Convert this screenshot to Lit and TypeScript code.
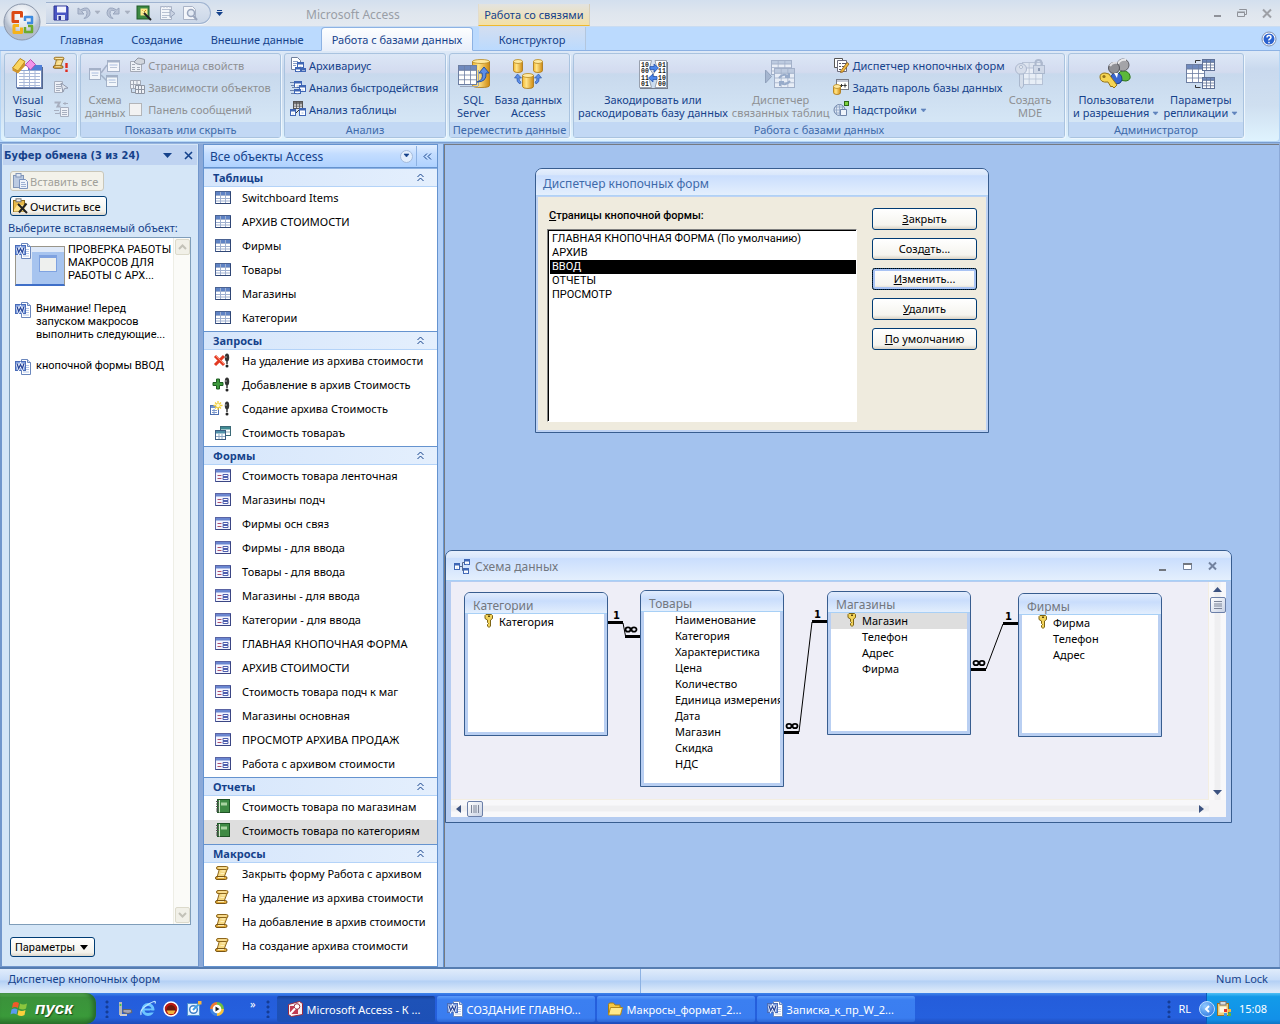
import { LitElement, html, css, svg, nothing } from "lit";
import type { SVGTemplateResult } from "lit";
import { customElement, property } from "lit/decorators.js";
import { classMap } from "lit/directives/class-map.js";
import { styleMap } from "lit/directives/style-map.js";

/* ---------- icon drawings ---------- */

const cylinder = (x: number, y: number, w: number, h: number) => svg`
  <path d="M${x} ${y + 2}v${h - 4}q0 2 ${w / 2} 2t${w / 2} -2v${-(h - 4)}z" fill="url(#gold)" stroke="#a87412" stroke-width=".8"/>
  <ellipse cx=${x + w / 2} cy=${y + 2} rx=${w / 2} ry="2" fill="#ffe9a0" stroke="#b98a20" stroke-width=".8"/>`;

const goldDefs = svg`<defs><linearGradient id="gold"><stop offset="0" stop-color="#f5b92e"/><stop offset=".35" stop-color="#ffe48a"/><stop offset="1" stop-color="#cf8a10"/></linearGradient></defs>`;

const gridTable = (x: number, y: number, w: number, h: number, head: string, line: string, paper = "#fff") => svg`
  <rect x=${x} y=${y} width=${w} height=${h} fill=${paper} stroke=${line}/>
  <rect x=${x} y=${y} width=${w} height=${h / 4} fill=${head} stroke=${line}/>
  <path d="M${x + w / 3} ${y}v${h}M${x + (2 * w) / 3} ${y}v${h}M${x} ${y + h / 2}h${w}M${x} ${y + (h * 3) / 4}h${w}" stroke=${line} stroke-width=".8" fill="none"/>`;

const miniWindow = (x: number, y: number, w: number, h: number, c = "#3f66b5") => svg`
  <rect x=${x} y=${y} width=${w} height=${h} fill="#fff" stroke=${c}/>
  <path d="M${x} ${y + 1}h${w}" stroke=${c} stroke-width="2"/>
  <path d="M${x + 2} ${y + 4.5}h${w - 4}" stroke="#9db4dc"/>`;

const exclaim = svg`<ellipse cx="15" cy="4.500" rx="2.200" ry="4" fill="#333"/><path d="M14.200 8h1.600v3h-1.600z" fill="#444"/><circle cx="15" cy="13" r="1.500" fill="#222"/><path d="M14 3v2" stroke="#aaa"/>`;

const scroll = svg`
  <path d="M5.500 3.500h8l-3.500 9h-7z" fill="#f6d983" stroke="#8d661c"/>
  <rect x="2.500" y="1.500" width="11.500" height="3" rx="1.500" fill="#f1c660" stroke="#8d661c"/>
  <rect x="1.500" y="11.500" width="11.500" height="3" rx="1.500" fill="#e2ad3e" stroke="#7a5513"/>
  <path d="M4.500 3h8M7.500 6h3.500M6.500 8.500h3.500M4 12.500h6" stroke="#fff3c4" stroke-width=".9"/>`;

const wordDoc = svg`
  <path d="M6.500 .5h6l3 3v12h-9z" fill="#fff" stroke="#6b87bd"/>
  <path d="M12.500 .5v3h3" fill="#cfdcf2" stroke="#6b87bd"/>
  <path d="M10 6.500h4M10 8.500h4M10 10.500h4M8 13h6" stroke="#b5c7e8"/>
  <rect x=".5" y="2.500" width="10" height="9" fill="#7fa0e0" stroke="#4a6cb8"/>
  <path d="M2 4.500l1.700 5 1.800-4 1.800 4 1.700-5" fill="none" stroke="#fff" stroke-width="2.600"/>
  <path d="M2 4.500l1.700 5 1.800-4 1.800 4 1.700-5" fill="none" stroke="#27469a" stroke-width="1.300"/>`;

const icons: Record<string, SVGTemplateResult> = {
  table: svg`<rect x=".5" y="1.500" width="15" height="12" fill="#fff" stroke="#4a6292"/>
    <rect x="1" y="2" width="14" height="3" fill="#5f83c4"/><path d="M1 13.500h15M15.500 2v12" stroke="#2f4675"/>
    <path d="M1 5.500h14M1 8.500h14M1 11h14M5.500 2v11M10.500 2v11" stroke="#9fb0d0"/>`,
  deleteQuery: svg`<path d="M0 3l9 9M9 3l-9 9" stroke="#e23a22" stroke-width="3"/><path d="M1 3l8 8" stroke="#ff8a70"/><g transform="translate(-3 0)">${exclaim}</g>`,
  addQuery: svg`<path d="M4.500 3h3v3.500h3.500v3h-3.500V13h-3V9.500H1v-3h3.500z" transform="translate(-3 -1)" fill="#3f9a3d" stroke="#1d5c22"/><g transform="translate(-3 0)">${exclaim}</g>`,
  makeQuery: svg`<rect x="-4.500" y="4.500" width="8" height="9" fill="#fff" stroke="#4d6fb0"/><path d="M-4 6h7" stroke="#6f93d6" stroke-width="2"/><path d="M-3 9.500h5M-3 11.500h5M-1 8v5" stroke="#7f9ace"/>
    <path d="M3 0v9M-1.500 4.500h9M0 1.500l6 6M6 1.500l-6 6" stroke="#f3cf3c" stroke-width="1.300"/><circle cx="3" cy="4.500" r="1.800" fill="#fffbd0"/><g transform="translate(-3 0)">${exclaim}</g>`,
  selectQuery: svg`<rect x="5.500" y="1.500" width="10" height="9" fill="#fff" stroke="#3c6a78"/><rect x="6" y="2" width="9" height="2.500" fill="#3f8a92"/><path d="M6 7h9M10.500 5v5" stroke="#8fb0ba"/>
    <rect x=".5" y="5.500" width="10" height="9" fill="#fff" stroke="#3c5c80"/><rect x="1" y="6" width="9" height="2.500" fill="#4f8fa8"/><path d="M1 11.500h9M4 9v5M7 9v5" stroke="#8fa8c4"/>`,
  form: svg`<rect x=".5" y="1.500" width="15" height="12" fill="#f4f5ff" stroke="#5a64a4"/><rect x="1" y="2" width="14" height="2.500" fill="#6a86d0"/>
    <path d="M1 13.500h15M15.500 2v12" stroke="#3b4684"/><path d="M2.500 7.500h4M2.500 10.500h4" stroke="#b0506a"/><path d="M8 6.500h5v2H8zM8 9.500h5v2H8z" fill="#fff" stroke="#4f5fae"/>`,
  report: svg`<rect x="2.500" y=".5" width="12" height="13" fill="#3f8a44" stroke="#1f5426"/><path d="M6 3.500h6v3H6z" fill="#a9d3a0"/><path d="M4.500 1v12.500" stroke="#d9ecd2"/><path d="M1 2.500h3M1 5h3M1 7.500h3M1 10h3M1 12h3" stroke="#555"/>`,
  macro: svg`<g transform="translate(-1 -1)">${scroll}</g>`,
  word: wordDoc,
  key: svg`<path d="M5 1.500h5.500l1 1v3l-2 1.500v6l-1.500 1.500L6.500 13V11.500l1-1-1-1V7L4 5.500v-3z" fill="#f2d35a" stroke="#7d6415"/><rect x="7" y="2.500" width="2" height="1.500" fill="#5d4a10"/>`,
  save: svg`<path d="M1 1h13l1 1v13H1z" fill="#4a56c4" stroke="#2c3590"/><rect x="4" y="1.500" width="9" height="6" fill="#f2f4ff"/><rect x="4" y="10" width="8" height="5" fill="#dde2f6"/><rect x="5.500" y="11" width="2.500" height="4" fill="#2c3590"/>`,
  undo: svg`<path d="M2 3v6h6L5.500 6.500Q11 3 11 8.500q0 3-3 5 6-1 6-6Q13 0 4.500 4.800z" fill="#b9c3d6" stroke="#98a5bd"/>`,
  redo: svg`<path d="M13 3v6H7l2.500-2.500Q4 3 4 8.500q0 3 3 5-6-1-6-6Q2 0 10.500 4.800z" fill="#b9c3d6" stroke="#98a5bd"/>`,
  designer: svg`<rect x="1" y="1" width="12" height="13" fill="#3d8a42" stroke="#215a28"/><rect x="4.500" y="3.500" width="7" height="7" fill="#ffe98a"/><path d="M6 5l3 3M10 5l-3 3" stroke="#c78418"/><path d="M7 7l8 8" stroke="#222" stroke-width="2"/><path d="M6 6l2 2" stroke="#fff6a0" stroke-width="2"/>`,
  exportPage: svg`<path d="M1.500 1.500h11v13h-11z" fill="#f4f6fa" stroke="#a9b3c6"/><path d="M3 4.500h8M3 7.500h8M3 10.500h8M3 12.500h5M2 1v2M5 1v2M8 1v2M11 1v2" stroke="#b8c1d2"/><path d="M11 4.500l5 4-5 4z" fill="#c9d2e2" stroke="#9aa6bd"/>`,
  preview: svg`<path d="M1.500 1.500h9l3 3v10h-12z" fill="#f4f6fa" stroke="#a9b3c6"/><circle cx="9" cy="8" r="3.500" fill="#e4ebf5" stroke="#9aa6bd" stroke-width="1.500"/><path d="M11.500 11l3.500 4" stroke="#9aa6bd" stroke-width="2"/>`,
  runMacro: svg`<g transform="translate(-1 -1) scale(.85)">${scroll}</g><path d="M13.500 6v5M13.500 12.500v2.500" stroke="#e02b1c" stroke-width="2.400"/>`,
  menuMacro: svg`<path d="M1.500 2.500h8v11h-8z" fill="#eef1f7" stroke="#a7afbf"/><path d="M3 5.500h5M3 7.500h5M3 9.500h5M3 11.500h4" stroke="#a7afbf"/><path d="M8 4l7 5-3.500.5L10 13z" fill="#dfe5ef" stroke="#9099ac"/>`,
  convertMacro: svg`<path d="M1.500 1.500h5l-2 4h3M6.500 11.500l3 3" fill="none" stroke="#a7afbf" stroke-width="2"/><path d="M7.500 6.500h8v9h-8z" fill="#eef1f7" stroke="#a7afbf"/><path d="M9 9.500h5M9 11.500h5M9 13.500h5M10 2.500h5M12 1v3M1 9.500h5M2 12.500h4" stroke="#a7afbf"/>`,
  propSheet: svg`<path d="M1.500 4.500h11v10h-11z" fill="#eef1f6" stroke="#a3a9b5"/><path d="M3 7.500h3M3 10.500h3M3 12.500h3M8 10.500h3M8 12.500h3" stroke="#a3a9b5"/><path d="M5 5l4-4 3 .5 3.500 1v4l-4 1L8 7z" fill="#d2d6dd" stroke="#8f96a3"/>`,
  dependencies: svg`<path d="M1.500 1.500h10v8h-10zM4.500 1.500v8M8 1.500v8M1.500 5.500h10" fill="#eef1f6" stroke="#a3a9b5"/><path d="M6.500 6.500h9v8h-9zM9.500 6.500v8M12.500 6.500v8M6.500 10.500h9" fill="#eef1f6" stroke="#8f96a3"/><path d="M2.500 10v3.500H6" fill="none" stroke="#8f96a3"/>`,
  archivist: svg`<path d="M1.500 .5h6l3 3v9h-9z" fill="#fff" stroke="#6f7f9c"/><path d="M3 4.500h5M3 6.500h5M3 8.500h3" stroke="#8ba0c8"/>${miniWindow(7.5, 5.5, 6, 5)}${miniWindow(5.5, 10.5, 5, 4)}${miniWindow(11.5, 11.5, 4, 3)}`,
  speed: svg`${miniWindow(4.5, 2.5, 7, 6)}${miniWindow(9.5, 6.5, 6, 6)}${miniWindow(4.5, 10.5, 6, 4)}<path d="M0 3.500h4M1 6.500h3M2 8.500h5M0 11.500h4M1 14.500h3" stroke="#6b83ad"/>`,
  analyzeTable: svg`${gridTable(3.5, 0.5, 9, 7, "#777", "#555")}${miniWindow(0.5, 8.5, 5, 6)}${miniWindow(9.5, 7.5, 6, 7)}<path d="M6 12l3-3" stroke="#333"/>`,
  switchboard: svg`<path d="M1.500 1.500h8v9h-8z" fill="#fff" stroke="#555"/><path d="M4.500 3.500h9v11h-9z" fill="#fff" stroke="#6d6d7d"/><path d="M6 6.500h2M6 9.500h2M6 12.500h2M9 6.500h4M9 9.500h3" stroke="#556"/><path d="M8 13.500l6-8 2 1.500-6 8-2.500.5z" fill="#f0b93c" stroke="#8a5a1c" stroke-width=".8"/>`,
  password: svg`${goldDefs}<rect x="3.500" y=".5" width="12" height="10" fill="#fff" stroke="#777b88"/><path d="M4 2h11" stroke="#c5cad8" stroke-width="2"/><path d="M7 6.500h3M8.500 5v3M12 4.500v4M10.300 6.500h3.400" stroke="#333"/>${cylinder(0.5, 5.5, 7, 10)}`,
  addins: svg`<circle cx="6.500" cy="9" r="5.500" fill="#dce6f4" stroke="#6f84a8"/><path d="M1 9h11M6.500 3.500v11M3.500 4.500v9M9.500 4.500v9M2 6h9M2 12h9" stroke="#8ea3c4" stroke-width=".8"/><path d="M7.500 8.500h6v6h-6z" fill="#eef3fa" stroke="#6f84a8"/><rect x="11.500" y=".5" width="4" height="4" fill="#7fd13e" stroke="#2c6b17"/>`,
  pasteAll: svg`<rect x="1.500" y="2.500" width="10" height="12" fill="#bccbe2" stroke="#8296b8"/><rect x="4" y=".5" width="5" height="3.500" fill="#dfe7f3" stroke="#8296b8"/><path d="M7.500 6.500h6l2 2v7h-8z" fill="#eef3fb" stroke="#7d94bd"/><path d="M9 9.500h4M9 11.500h5M9 13.500h5" stroke="#9db1d3"/>`,
  clearAll: svg`<rect x="1.500" y="2.500" width="11" height="11" fill="#e8ba4a" stroke="#8a6a1c"/><path d="M2 12l3-5h9l-2 6.500H2z" fill="#ffe48e"/><rect x="4" y=".8" width="5" height="3" fill="#eee" stroke="#777"/><path d="M6 6l9 9M14.500 5.500L7 14.500" stroke="#222" stroke-width="2"/>`,
  schema: svg`${miniWindow(0.5, 4.5, 5, 6)}${miniWindow(10.5, 0.5, 5, 5)}${miniWindow(9.5, 9.5, 5, 5)}<path d="M6 7.500h2.500M8.500 3.500v8M8.500 3.500h2M8.500 11.500h1" stroke="#55688f" fill="none"/>`,
  accessApp: svg`<path d="M1.500 3.500l11-3 3 2v11l-11 2-3-2z" fill="#fbeef0" stroke="#9b2a3f"/><path d="M3 5h8v8H3z" fill="#c23a52"/><circle cx="10" cy="5.500" r="2.800" fill="#fff" stroke="#9b2a3f"/><path d="M8 7.500l-5 5.500" stroke="#fff" stroke-width="2"/>`,
  folder: svg`<path d="M1.500 3.500q0-1.500 1.500-1.500h3.500l1.500 2h5v9.500h-11.500z" fill="#f6c842" stroke="#a87d12"/><path d="M3.500 6.500h12l-2 7.500h-12z" fill="#ffe98c" stroke="#b58a1c"/>`,
  desktop: svg`<path d="M3.500 1v13" stroke="#b8b8b8" stroke-width="3"/><circle cx="3.500" cy="4" r="1" fill="#3c3"/><path d="M6 8.500h8l1 3-4 1-5-1z" fill="#a4a4b4" stroke="#666"/><path d="M3 14h7" stroke="#ccc" stroke-width="2"/>`,
  ie: svg`<circle cx="8" cy="8.500" r="5" fill="none" stroke="#6cc5ff" stroke-width="3"/><path d="M4 8.500h9.500" stroke="#6cc5ff" stroke-width="2"/><path d="M10 10.500h5" stroke="#2363dc" stroke-width="2"/><path d="M1 14Q-1 9 8 3.500T15 2.500" fill="none" stroke="#bfe6ff" stroke-width="1.200"/>`,
  redCircle: svg`<circle cx="8" cy="8" r="7" fill="#b81a14" stroke="#fff" stroke-width="1.500"/><path d="M3 10q1-6 5-6 4 0 5 6z" fill="#6a1a0c"/><path d="M3.500 9.500h9l-2 3.500h-5z" fill="#f2b33c"/>`,
  outlook: svg`<rect x="1.500" y="2.500" width="12" height="12" fill="#dbeeff" stroke="#4d8fd0"/><circle cx="7.500" cy="8.500" r="3.800" fill="#fff" stroke="#3f7fc8" stroke-width="1.500"/><path d="M7 9l7-7" stroke="#3aa0e8" stroke-width="2"/><rect x="12" y="0" width="3.500" height="3.500" fill="#f7b53c"/>`,
  media: svg`<path d="M8 1a7 7 0 0 1 7 7H8z" fill="#6fbf3f"/><path d="M15 8a7 7 0 0 1-7 7V8z" fill="#f6c33c"/><path d="M8 15a7 7 0 0 1-7-7h7z" fill="#3f86e0"/><path d="M1 8a7 7 0 0 1 7-7v7z" fill="#ef7a2f"/><circle cx="8" cy="8" r="4.300" fill="#fff"/><path d="M6.500 5.500l4 2.500-4 2.500z" fill="#222"/>`,
  trayPaste: svg`<rect x="1.500" y="2.500" width="11" height="12" fill="#f0cd7a" stroke="#9c7420"/><rect x="4" y=".5" width="6" height="3.500" fill="#ddd" stroke="#777"/><path d="M3.500 5.500h7v6h-7z" fill="#fff8e0"/><rect x="8" y="8" width="3" height="3" fill="#e2342a"/><rect x="12" y="8" width="3" height="3" fill="#f8b83a"/><rect x="8" y="12" width="3" height="3" fill="#3f9be8"/><rect x="12" y="12" width="3" height="3" fill="#59b83c"/>`,
  help: svg`<circle cx="8" cy="8" r="7" fill="#fff" stroke="#7d8fb0"/><circle cx="8" cy="8" r="5.500" fill="#2a62cf"/><path d="M6 6.500q0-2 2-2t2 1.800q0 1-1.200 1.700T8 9.500M8 10.800v1.500" fill="none" stroke="#fff" stroke-width="1.500"/>`,
  vb: svg`<rect x="4.500" y="7.500" width="25" height="22" fill="#fff" stroke="#6f86b5"/><path d="M16 7h14v5H16z" fill="#4f7fd8"/><path d="M5 12.500h24" stroke="#8fa5cf"/><path d="M7 15.500h21M7 18.500h21M7 21.500h21M7 24.500h21M7 27.500h21M12 13v16M17.500 13v16M23 13v16" stroke="#a9b8d8"/><path d="M5 30.500h26M30.500 9v21" stroke="#55688f"/>
    <path d="M.5 10L8 .5l5 3-7 9.500z" fill="#fbd55f" stroke="#b98718"/><path d="M6 13l7-9.500v4.500l-7 7.500-5.500-3v-2.500z" fill="#d2952a"/><path d="M13.500 6.500l5-5 5 5-5 5.500z" fill="#f293e8" stroke="#b94fb2"/>`,
  schemaBig: svg`<g opacity=".75">${miniWindow(0.5, 10.5, 11, 11, "#95a3bb")}${miniWindow(18.5, 2.5, 12, 11, "#95a3bb")}${miniWindow(17.5, 17.5, 11, 11, "#95a3bb")}<path d="M12 15l6-8M12 17l6 6" stroke="#95a3bb" stroke-width="1.500"/><path d="M3 17.500h6M21 9.500h7M20 24.500h7" stroke="#b4bfd2"/></g>`,
  sqlServer: svg`${goldDefs}${cylinder(14.5, 1.5, 17, 28)}${gridTable(0.5, 7.5, 18, 19, "#6f89bd", "#6d7ea2")}<path d="M2 28.500h18M20.500 12v16" stroke="#9aa5bb"/><path d="M19 24q7-2 5-9h-3l5-6 5 6h-3q1 9-9 9z" fill="#5b8de8" stroke="#27519f"/>`,
  baseData: svg`${goldDefs}${cylinder(1.5, 1.5, 9, 13)}${cylinder(21.5, 1.5, 9, 13)}${cylinder(10.5, 15.5, 11, 15)}<path d="M8 26q-4-2-3-6H2.500L5.500 16l4 4H7q0 3 2 4zM24 26q4-2 3-6h2.500L26.500 16l-4 4H25q0 3-2 4z" fill="#5b8de8" stroke="#27519f" stroke-width=".6"/>`,
  encode: svg`<path d="M2.500 2.500h12l-2 8 4 6-4 6 2 7h-12zM18 2.500h11.500v27H18l2-7-4-6 4-6z" fill="#fff" stroke="#98a0ae"/><path d="M3 30.500h27M30.500 4v27" stroke="#777f8e"/>
    <g font-family="Liberation Mono" font-size="6.500" font-weight="700" fill="#222"><text x="4" y="9">10</text><text x="21" y="9">01</text><text x="4" y="15">00</text><text x="21" y="15">11</text><text x="4" y="21.500">11</text><text x="21" y="21.500">10</text><text x="4" y="27.500">01</text><text x="21" y="27.500">00</text></g>
    <path d="M13 8.500h4V6l4.500 4-4.500 4v-2.500h-4zM20 18.500h-4V16l-4.500 4 4.500 4v-2.500h4z" fill="#4b85ea" stroke="#1e4aa6" stroke-width=".7"/>`,
  linkedTables: svg`<g opacity=".85"><path d="M0.500 12v13l6-6.500z" fill="#9fb0cb" stroke="#8697b3"/>${gridTable(6.5, 2.5, 20, 14, "#b9c7dd", "#9aa9c3", "#edf1f8")}${gridTable(9.5, 10.5, 20, 19, "#b9c7dd", "#9aa9c3", "#edf1f8")}<path d="M14 20q5-6 10-1M25 23q-5 6-10 1M24 15v4h-4M15 28v-4h4" fill="none" stroke="#8fa3c4" stroke-width="2"/></g>`,
  mde: svg`<g opacity=".8">${gridTable(8.5, 4.5, 20, 22, "#dfe6f0", "#b0bbcf", "#eff3f9")}<circle cx="7" cy="11" r="5.500" fill="#d7deea" stroke="#a3b0c6"/><circle cx="7" cy="9" r="1.500" fill="#fff" stroke="#a3b0c6"/><path d="M5.500 16h4v12l-2 2.500-2-2.500z" fill="#d7deea" stroke="#a3b0c6"/><path d="M21.500 8V5q0-3 3-3t3 3v3" fill="none" stroke="#a3b0c6" stroke-width="2"/><rect x="19.500" y="7.500" width="11" height="8" fill="#cfd8e6" stroke="#a3b0c6"/><path d="M25 10v3" stroke="#7f8ea8" stroke-width="2"/></g>`,
  users: svg`<path d="M18 22q-1-9 5-9t7 5q1 4-4 5z" fill="#5cb83a" stroke="#2d7418"/><circle cx="23" cy="7" r="6" fill="#a4a4a8" stroke="#606066"/><path d="M18 6q2-5 8-4" fill="none" stroke="#e8e8ea" stroke-width="2"/><path d="M10 24q0-9 6-9t6 7q-1 4-6 4z" fill="#3a67cf" stroke="#1d3c8e"/><circle cx="14" cy="10" r="5.500" fill="#8f8f94" stroke="#55555b"/><path d="M10 8q2-4 7-3" fill="none" stroke="#dedee2" stroke-width="2"/><path d="M14 15h4l-1 5z" fill="#fff"/><path d="M0 19q0-4 5-4t6 4l6 8-3 3-2-2-1 1-3-5q-8 1-8-5z" fill="#f6d552" stroke="#94741a"/><circle cx="4" cy="18.500" r="1.600" fill="#94741a"/>`,
  replication: svg`${gridTable(1.5, 6.5, 18, 18, "#6f89bd", "#6d7ea2")}${gridTable(17.5, 1.5, 12, 11, "#6f89bd", "#5f7196")}${gridTable(17.5, 19.5, 12, 11, "#6f89bd", "#5f7196")}<path d="M10.500 5V2.500h5M10.500 27v2.500h5" fill="none" stroke="#333"/>`,
};

const icon = (name: string, size = 16) =>
  html`<svg class="icon" width=${size} height=${size} viewBox="0 0 ${size} ${size}" aria-hidden="true">${icons[name]}</svg>`;

const caret = (color = "#15428b") =>
  html`<svg class="caret" width="7" height="4" viewBox="0 0 7 4" aria-hidden="true"><path d="M1 0h5L3.500 3z" fill=${color} stroke=${color} stroke-width=".6" /></svg>`;

const baseStyles = css`
  * { box-sizing: border-box; }
  button, select, input { font: inherit; color: inherit; margin: 0; padding: 0; }
  button { background: none; border: 0; }
  ul { list-style: none; margin: 0; padding: 0; }
  a { color: inherit; text-decoration: none; }
  h2, h3, p { margin: 0; font: inherit; }
  svg { display: block; flex: none; overflow: visible; }
`;

/* ---------- title bar, tabs and ribbon ---------- */

@customElement("access-ribbon")
class AccessRibbon extends LitElement {
  static styles = [baseStyles, css`
    :host { display: block; position: relative; color: #15428b; background: #bbdafe; }
    .titlebar { display: flex; height: 27px; padding-left: 46px; background: linear-gradient(#d3dfee, #dfe6ee 50%, #e4e9f0); border-bottom: 1px solid #c9dcf2; }
    .quick { display: flex; align-items: center; gap: 7px; width: 165px; height: 22px; margin-top: 2px; padding: 0 7px; border: 1px solid #9fb3d0; border-left: 0; border-radius: 0 11px 11px 0; background: linear-gradient(#dde5f0, #cbd7e8); box-shadow: 0 1px #f5f8fc; }
    .pair { display: flex; align-items: center; gap: 2px; }
    .pair .caret { margin: 0 -2px 0 0; }
    .more { width: 17px; display: flex; flex-direction: column; align-items: center; gap: 1px; padding-top: 10px; }
    .bar { width: 5px; height: 1px; background: #15428b; }
    .title { flex: 0 0 250px; text-align: center; font-size: 12px; line-height: 29px; color: #999ea6; }
    .context { width: 112px; margin-top: 4px; text-align: center; line-height: 21px; font-size: 11px; background: linear-gradient(#e3e3e0, #f3e0a6); border-bottom: 1px solid #f0b92e; border-left: 1px solid #e3dccb; border-right: 1px solid #d8cfb8; }
    .wincontrols { margin-left: auto; display: flex; gap: 11px; padding: 5px 6px 0 0; }
    .wincontrols button { width: 14px; height: 16px; }
    .office { position: absolute; left: 3px; top: 3px; width: 38px; height: 38px; z-index: 1; }
    .tabs { display: flex; gap: 6px; height: 24px; padding-left: 49px; padding-right: 3px; border-bottom: 1px solid #8db2e3; line-height: 25px; }
    .tab { padding: 0 11px; font-size: 11px; height: 24px; }
    .tab.active { background: linear-gradient(#fdfeff, #e9effa); border: 1px solid #8db2e3; border-bottom-color: #eaf0fa; border-radius: 4px 4px 0 0; padding: 0 10px; line-height: 23px; }
    .tab.contextual { width: 107px; text-align: center; background: linear-gradient(#d3def0, #bbdafe); border-right: 1px solid #b3c6dd; padding: 0; height: 23px; }
    .help { margin-left: auto; padding-top: 3px; height: 20px; }
    .ribbon { display: flex; gap: 3px; height: 91px; padding: 2px 3px 0; border: 1px solid #b5d5f5; border-top: 0; border-radius: 0 0 4px 4px; background: linear-gradient(#dde9f7, #c9d9ee 20%, #cfdff0 60%, #dff3fe); }
    .under { height: 2px; background: linear-gradient(#6a92cb, #a5c0e4); }
    .group { display: flex; flex-direction: column; height: 85px; border: 1px solid #a9c3df; border-radius: 3px; background: linear-gradient(#dce7f6, #d3dbef 22%, #c8d9ed 24%, #d9eaf8); box-shadow: 1px 1px #eef6fd; }
    .content { flex: 1; display: flex; gap: 4px; padding: 0 4px; }
    .caption { height: 15px; line-height: 15px; text-align: center; color: #3e6aaa; background: #c2d8f4; white-space: nowrap; }
    .big { display: flex; flex-direction: column; align-items: center; padding-top: 4px; line-height: 13px; white-space: nowrap; }
    .big .icon { margin-bottom: 3px; }
    .column { display: flex; flex-direction: column; }
    .small { display: flex; align-items: center; gap: 3px; height: 22px; white-space: nowrap; }
    .caret { display: inline-block; vertical-align: middle; margin-left: 3px; }
    :disabled, .off { color: #8e9093; }
    .check { appearance: none; width: 13px; height: 13px; margin: 0 3px 0 0; border: 1px solid #b3b5b8; background: #f2f2f2; }
    .w-macro { width: 73px; } .w-show { width: 201px; } .w-analyze { width: 162px; }
    .w-move { width: 121px; } .w-data { width: 492px; } .w-admin { width: 176px; }
    .w-macro .content, .w-move .content { padding: 0 7px; justify-content: space-between; gap: 0; }
    .w-analyze .content { padding: 0 5px; }
  `];

  private big(name: string, lines: string[], off = false, menu = false) {
    return html`<button class="big" ?disabled=${off}>${icon(name, 32)}
      ${lines.map((l, i) => html`<span>${l}${menu && i === lines.length - 1 ? caret("#5f83bd") : nothing}</span>`)}</button>`;
  }

  private small(name: string, label: string, off = false, menu = false) {
    return html`<button class="small" ?disabled=${off} aria-label=${label || name}>${icon(name)}${label ? html`<span>${label}${menu ? caret("#5f83bd") : nothing}</span>` : nothing}</button>`;
  }

  render() {
    return html`
      <header class="titlebar">
        <div class="quick">
          <button aria-label="Сохранить">${icon("save")}</button>
          <button class="pair" disabled aria-label="Отменить">${icon("undo")}${caret("#a7b0c0")}</button>
          <button class="pair" disabled aria-label="Вернуть">${icon("redo")}${caret("#a7b0c0")}</button>
          <button aria-label="Конструктор">${icon("designer")}</button>
          <button disabled aria-label="Экспорт">${icon("exportPage")}</button>
          <button disabled aria-label="Просмотр">${icon("preview")}</button>
        </div>
        <button class="more" aria-label="Настройка"><span class="bar"></span><svg width="7" height="4"><path d="M0 0h7L3.500 4z" fill="#15428b" /></svg></button>
        <div class="title">Microsoft Access</div>
        <div class="context">Работа со связями</div>
        <div class="wincontrols">
          <button aria-label="Свернуть"><svg width="14" height="14"><path d="M4 10h7" stroke="#8f9299" stroke-width="2" /></svg></button>
          <button aria-label="Восстановить"><svg width="14" height="14"><path d="M4.500 4V3.500h7v5H10M2.500 6.500h7v4h-7zM2 6h8" fill="none" stroke="#8f9299" /></svg></button>
          <button aria-label="Закрыть"><svg width="14" height="14"><path d="M3 3.500l8 8M11 3.500l-8 8" stroke="#9da0a6" stroke-width="2" /></svg></button>
        </div>
      </header>
      <button class="office" aria-label="Office">
        <svg width="38" height="38" viewBox="0 0 38 38"><defs><radialGradient id="orb" cy=".3"><stop offset="0" stop-color="#fff" /><stop offset=".75" stop-color="#dbe1ea" /><stop offset="1" stop-color="#b4bece" /></radialGradient></defs>
          <circle cx="19" cy="19" r="18" fill="url(#orb)" stroke="#8b97ab" />
          <g fill="none" stroke-width="3" stroke-linejoin="round"><path d="M16 18.500H10V9.500h8.500v5" stroke="#dc4a14" /><path d="M22 18v-4h7v6h-5" stroke="#3d8be0" stroke-width="2.500" /><path d="M16 22.500H11v7h7.500v-5" stroke="#f5b21a" /><path d="M22 24v5h7v-6h-4" stroke="#6cab2c" stroke-width="2.500" /></g>
        </svg>
      </button>
      <nav class="tabs">
        <button class="tab">Главная</button>
        <button class="tab">Создание</button>
        <button class="tab">Внешние данные</button>
        <button class="tab active">Работа с базами данных</button>
        <button class="tab contextual">Конструктор</button>
        <button class="help" aria-label="Справка">${icon("help")}</button>
      </nav>
      <div class="ribbon">
        <section class="group w-macro"><div class="content">
          ${this.big("vb", ["Visual", "Basic"])}
          <div class="column">${this.small("runMacro", "")}${this.small("menuMacro", "", true)}${this.small("convertMacro", "", true)}</div>
        </div><div class="caption">Макрос</div></section>
        <section class="group w-show"><div class="content">
          ${this.big("schemaBig", ["Схема", "данных"], true)}
          <div class="column">${this.small("propSheet", "Страница свойств", true)}${this.small("dependencies", "Зависимости объектов", true)}
            <label class="small off"><input class="check" type="checkbox" disabled />Панель сообщений</label></div>
        </div><div class="caption">Показать или скрыть</div></section>
        <section class="group w-analyze"><div class="content">
          <div class="column">${this.small("archivist", "Архивариус")}${this.small("speed", "Анализ быстродействия")}${this.small("analyzeTable", "Анализ таблицы")}</div>
        </div><div class="caption">Анализ</div></section>
        <section class="group w-move"><div class="content">
          ${this.big("sqlServer", ["SQL", "Server"])}${this.big("baseData", ["База данных", "Access"])}
        </div><div class="caption">Переместить данные</div></section>
        <section class="group w-data"><div class="content">
          ${this.big("encode", ["Закодировать или", "раскодировать базу данных"])}
          ${this.big("linkedTables", ["Диспетчер", "связанных таблиц"], true)}
          <div class="column">${this.small("switchboard", "Диспетчер кнопочных форм")}${this.small("password", "Задать пароль базы данных")}${this.small("addins", "Надстройки", false, true)}</div>
          ${this.big("mde", ["Создать", "MDE"], true)}
        </div><div class="caption">Работа с базами данных</div></section>
        <section class="group w-admin"><div class="content">
          ${this.big("users", ["Пользователи", "и разрешения"], false, true)}${this.big("replication", ["Параметры", "репликации"], false, true)}
        </div><div class="caption">Администратор</div></section>
      </div>
      <div class="under"></div>`;
  }
}

/* ---------- clipboard pane ---------- */

@customElement("clipboard-pane")
class ClipboardPane extends LitElement {
  static styles = [baseStyles, css`
    :host { display: flex; flex-direction: column; width: 199px; padding: 1px 1px 0 1px; background: #d5e6f7; border: solid #7297cc; border-width: 0 1px 1px 2px; font-size: 11px; }
    .head { display: flex; align-items: center; height: 20px; background: #bfd3f1; color: #15428b; font-weight: 700; font-family: "DejaVu Sans Condensed", sans-serif; white-space: nowrap; padding: 0 4px 0 1px; }
    .head button { margin-left: auto; }
    .head button + button { margin-left: 12px; }
    .actions { display: flex; flex-direction: column; align-items: flex-start; gap: 5px; padding: 6px 7px 5px; }
    .xp { display: flex; align-items: center; gap: 2px; height: 20px; padding: 0 5px 0 1px; border: 1px solid #003c74; border-radius: 3px; background: linear-gradient(#fff, #f3f2ec 80%, #dcd6ca); white-space: nowrap; color: #000; }
    .xp:disabled { color: #a0a09a; border-color: #c9c7ba; background: #f3f2ea; }
    .hint { padding-left: 5px; color: #15428b; line-height: 14px; }
    .list { flex: 1; display: flex; margin: 2px 6px 0; border: 1px solid #7f9db9; background: #fff; }
    .items { flex: 1; padding: 5px 0 0 5px; min-width: 0; font-family: "Roboto", sans-serif; }
    .item { display: flex; gap: 5px; line-height: 13px; min-height: 57px; color: #000; white-space: nowrap; position: relative; }
    .item.first { gap: 3px; height: 59px; }
    .thumb { width: 50px; height: 40px; margin-top: 3px; border: 1px solid #9a968a; background: linear-gradient(#dfe9f8 14%, transparent 14%), linear-gradient(90deg, #dfe8f5 34%, #a7c4ef 34%); display: flex; justify-content: flex-end; align-items: flex-end; padding: 0 7px 12px 0; border-bottom: 2px solid #3f6fc8; }
    .thumb i { width: 18px; height: 17px; background: #eef0ee; border: 1px solid #7fa2e0; border-top-width: 3px; }
    .badge { position: absolute; left: 0; top: 0; }
    .scroll { width: 17px; display: flex; flex-direction: column; justify-content: space-between; padding: 1px; background: #fbfbf8; border-left: 1px solid #eeeee6; }
    .scroll button { height: 16px; width: 15px; border: 1px solid #dcdacb; border-radius: 2px; background: #f1f0e8; display: grid; place-items: center; }
    .foot { padding: 12px 7px 9px; }
    .foot .xp { padding: 0 6px 0 4px; gap: 5px; font-family: "Roboto", sans-serif; }
  `];

  render() {
    return html`
      <div class="head"><span>Буфер обмена (3 из 24)</span>
        <button aria-label="Меню"><svg width="9" height="5"><path d="M0 0h9L4.500 5z" fill="#15428b" /></svg></button>
        <button aria-label="Закрыть"><svg width="9" height="9"><path d="M1 1l7 7M8 1l-7 7" stroke="#15428b" stroke-width="1.600" /></svg></button></div>
      <div class="actions">
        <button class="xp" disabled>${icon("pasteAll")}Вставить все</button>
        <button class="xp">${icon("clearAll")}Очистить все</button>
      </div>
      <p class="hint">Выберите вставляемый объект:</p>
      <div class="list">
        <ul class="items">
          <li class="item first"><span class="thumb"><i></i></span><span class="badge">${icon("word")}</span><span>ПРОВЕРКА РАБОТЫ<br />МАКРОСОВ ДЛЯ<br />РАБОТЫ С АРХ...</span></li>
          <li class="item">${icon("word")}<span>Внимание! Перед<br />запуском макросов<br />выполнить следующие...</span></li>
          <li class="item">${icon("word")}<span>кнопочной формы ВВОД</span></li>
        </ul>
        <div class="scroll">
          <button aria-label="Вверх" disabled><svg width="9" height="6"><path d="M1 5l3.500-3.500L8 5" fill="none" stroke="#c3c2b8" stroke-width="2" /></svg></button>
          <button aria-label="Вниз" disabled><svg width="9" height="6"><path d="M1 1l3.500 3.500L8 1" fill="none" stroke="#c3c2b8" stroke-width="2" /></svg></button>
        </div>
      </div>
      <div class="foot"><button class="xp">Параметры <svg width="8" height="5"><path d="M0 0h8L4 5z" fill="#000" /></svg></button></div>`;
  }
}

/* ---------- navigation pane ---------- */

interface NavGroup { title: string; items: [string, string][]; }

const withIcon = (name: string, labels: string[]): [string, string][] => labels.map((l) => [name, l]);

const navGroups: NavGroup[] = [
  { title: "Таблицы", items: withIcon("table", ["Switchboard Items", "АРХИВ СТОИМОСТИ", "Фирмы", "Товары", "Магазины", "Категории"]) },
  { title: "Запросы", items: [["deleteQuery", "На удаление из архива стоимости"], ["addQuery", "Добавление в архив Стоимость"], ["makeQuery", "Содание архива Стоимость"], ["selectQuery", "Стоимость товараъ"]] },
  { title: "Формы", items: withIcon("form", ["Стоимость товара ленточная", "Магазины подч", "Фирмы осн связ", "Фирмы - для ввода", "Товары - для ввода", "Магазины - для ввода", "Категории - для ввода", "ГЛАВНАЯ КНОПОЧНАЯ ФОРМА", "АРХИВ СТОИМОСТИ", "Стоимость товара подч к маг", "Магазины основная", "ПРОСМОТР АРХИВА ПРОДАЖ", "Работа с архивом стоимости"]) },
  { title: "Отчеты", items: withIcon("report", ["Стоимость товара по магазинам", "Стоимость товара по категориям"]) },
  { title: "Макросы", items: withIcon("macro", ["Закрыть форму Работа с архивом", "На удаление из архива стоимости", "На добавление в архив стоимости", "На создание архива стоимости"]) },
];

@customElement("nav-pane")
class NavPane extends LitElement {
  @property() selected = "";

  static styles = [baseStyles, css`
    :host { display: block; width: 235px; background: #fff; border: 1px solid #6593cf; font-size: 11px; color: #000; }
    .head { display: flex; align-items: center; height: 23px; padding-left: 6px; background: linear-gradient(#e3efff, #c4ddff 40%, #afd2ff); color: #15428b; font-size: 12px; border-bottom: 1px solid #6593cf; }
    .round { margin-left: auto; width: 13px; height: 13px; border: 1px solid #a4bbdc; border-radius: 7px; background: #e3eefc; display: grid; place-items: center; }
    .shut { width: 21px; height: 20px; margin-left: 3px; border-left: 1px solid #8db2e3; display: grid; place-items: center; }
    .title { display: flex; align-items: center; justify-content: space-between; height: 19px; padding: 0 13px 0 9px; background: linear-gradient(90deg, #d6e6fb, #e4effd); border-top: 1px solid #6593cf; border-bottom: 1px solid #b4d3f8; color: #15428b; font-weight: 700; }
    .first .title { border-top-color: #8db2e3; }
    .row a { display: flex; align-items: center; gap: 11px; height: 24px; padding: 0 0 3px 11px; white-space: nowrap; }
    .row.selected { background: #dedede; }
  `];

  render() {
    return html`
      <div class="head"><span>Все объекты Access</span>
        <button class="round" aria-label="Выбор категории">${caret()}</button>
        <button class="shut" aria-label="Свернуть область"><svg width="9" height="7"><path d="M4 .5l-3 3 3 3M8 .5l-3 3 3 3" fill="none" stroke="#15428b" /></svg></button></div>
      ${navGroups.map((g, i) => html`<section class=${classMap({ first: i === 0 })}>
        <h3 class="title">${g.title}<svg width="7" height="9"><path d="M.5 4l3-3 3 3M.5 8l3-3 3 3" fill="none" stroke="#15428b" /></svg></h3>
        <ul>${g.items.map(([ic, label]) => html`<li class=${classMap({ row: true, selected: label === this.selected })}><a href="#">${icon(ic)}<span>${label}</span></a></li>`)}</ul>
      </section>`)}`;
  }
}

/* ---------- switchboard manager dialog ---------- */

@customElement("switchboard-dialog")
class SwitchboardDialog extends LitElement {
  static styles = [baseStyles, css`
    :host { display: flex; flex-direction: column; border: 1px solid #385d8f; border-radius: 7px 7px 0 0; background: #bdd2f4; overflow: hidden; color: #000; font-size: 11px; }
    .title { height: 27px; padding-left: 7px; line-height: 30px; font-size: 12px; color: #3e6aaa; background: linear-gradient(#e6effd, #d9e7fb 22%, #cadefd 26%, #e4effd); border-bottom: 1px solid #b0d2f5; }
    .body { flex: 1; display: flex; gap: 15px; margin: 1px 2px 2px; padding: 11px 9px 8px; background: #efebde; font-family: "Roboto", sans-serif; }
    .pages { flex: 1; display: flex; flex-direction: column; }
    .label { font-weight: 500; line-height: 15px; padding: 0 0 6px 2px; }
    .list { flex: 1; width: 100%; border: 1px solid #808080; border-color: #808080 #fff #fff #808080; box-shadow: inset 1px 1px #000; outline: 0; background: #fff; overflow: hidden; padding: 2px 0 0 2px; border-radius: 0; }
    option { height: 14px; min-height: 14px; line-height: 14px; padding: 0 2px; color: #000; }
    option:checked { background: #000 linear-gradient(#000, #000); color: #fff; }
    .buttons { width: 105px; display: flex; flex-direction: column; gap: 8px; }
    .xp { height: 22px; padding-bottom: 2px; border: 1px solid #003c74; border-radius: 3px; background: linear-gradient(#fff, #f5f4ee 80%, #d9d2c5); font-family: "Noto Sans", sans-serif; }
    .xp.focused { outline: 1px dotted #000; outline-offset: -1px; box-shadow: inset 0 0 0 2px #a9c3f3; }
  `];

  render() {
    return html`
      <h2 class="title">Диспетчер кнопочных форм</h2>
      <div class="body">
        <div class="pages">
          <label class="label" for="pages"><u>С</u>траницы кнопочной формы:</label>
          <select class="list" id="pages" size="5">
            <option>ГЛАВНАЯ КНОПОЧНАЯ ФОРМА (По умолчанию)</option>
            <option>АРХИВ</option>
            <option selected>ВВОД</option>
            <option>ОТЧЕТЫ</option>
            <option>ПРОСМОТР</option>
          </select>
        </div>
        <div class="buttons">
          <button class="xp"><u>З</u>акрыть</button>
          <button class="xp">Созд<u>а</u>ть...</button>
          <button class="xp focused"><u>И</u>зменить...</button>
          <button class="xp"><u>У</u>далить</button>
          <button class="xp"><u>П</u>о умолчанию</button>
        </div>
      </div>`;
  }
}

/* ---------- relationships window ---------- */

interface TableNode { title: string; x: number; y: number; height: number; fields: string[]; key?: string; active?: boolean; }

const nodes: TableNode[] = [
  { title: "Категории", x: 13, y: 10, height: 144, fields: ["Категория"], key: "Категория" },
  { title: "Товары", x: 189, y: 8, height: 197, fields: ["Наименование", "Категория", "Характеристика", "Цена", "Количество", "Единица измерения", "Дата", "Магазин", "Скидка", "НДС"] },
  { title: "Магазины", x: 376, y: 9, height: 144, fields: ["Магазин", "Телефон", "Адрес", "Фирма"], key: "Магазин", active: true },
  { title: "Фирмы", x: 567, y: 11, height: 144, fields: ["Фирма", "Телефон", "Адрес"], key: "Фирма" },
];

@customElement("relations-window")
class RelationsWindow extends LitElement {
  static styles = [baseStyles, css`
    :host { display: flex; flex-direction: column; border: 1px solid #385d8f; border-radius: 7px 7px 0 0; background: #b5ccf1; overflow: hidden; font-size: 11px; color: #000; }
    .title { display: flex; align-items: center; gap: 5px; height: 30px; padding: 2px 13px 0 8px; font-size: 12px; color: #72777f; background: linear-gradient(#e6effd, #d9e7fb 22%, #cadefd 26%, #e4effd); border-bottom: 1px solid #a8d0f6; }
    .controls { margin-left: auto; display: flex; gap: 14px; }
    .frame { flex: 1; display: grid; grid-template-columns: 1fr 17px; grid-template-rows: 1fr 17px; margin: 1px 5px 5px; background: #f6f5f7; }
    .canvas { position: relative; overflow: hidden; background: #eeeef7; border: solid #f3eee2; border-width: 0 1px 1px 0; }
    .lines { position: absolute; left: 0; top: 0; }
    .node { position: absolute; width: 144px; display: flex; flex-direction: column; border: 1px solid #385d8f; border-radius: 6px 6px 0 0; background: #b9cff2; overflow: hidden; }
    .name { height: 21px; padding-left: 8px; line-height: 25px; font-size: 12px; color: #72777f; background: linear-gradient(#e1ecfd, #c9ddfc 40%, #e2eefd); border-bottom: 1px solid #a8d0f6; }
    .fields { flex: 1; margin: 0 3px 3px; background: #fff; overflow: hidden; }
    .field { display: flex; align-items: center; height: 16px; padding: 0 0 2px 31px; white-space: nowrap; }
    .field.keyed { padding-left: 13px; gap: 2px; }
    .field.active { background: #dedede; }
    .vbar, .hbar { display: flex; justify-content: space-between; align-items: center; background: linear-gradient(90deg, #f8f8fa 30%, #efeff1 35%, #efeff1 65%, #f8f8fa 70%); }
    .vbar { flex-direction: column; padding: 5px 0; }
    .hbar { background: linear-gradient(#f8f8fa 30%, #efeff1 35%, #efeff1 65%, #f8f8fa 70%); padding: 0 4px; }
    .group { display: flex; align-items: center; gap: 6px; }
    .vbar .group { flex-direction: column; gap: 5px; }
    .thumb { display: grid; place-items: center; width: 16px; height: 16px; border: 1px solid #6b7fa8; border-radius: 2px; background: linear-gradient(135deg, #fff, #c9d2e4); }
  `];

  render() {
    const dark = "#3b5280";
    return html`
      <div class="title">${icon("schema")}<span>Схема данных</span>
        <span class="controls">
          <button aria-label="Свернуть"><svg width="11" height="11"><path d="M2 9h7" stroke="#72777f" stroke-width="2" /></svg></button>
          <button aria-label="Развернуть"><svg width="11" height="11"><path d="M1.500 2.500h8v6h-8z" fill="#fff" stroke="#72829f" /><path d="M1 3h9" stroke="#72777f" stroke-width="2" /></svg></button>
          <button aria-label="Закрыть"><svg width="11" height="11"><path d="M2 1.500l7 7M9 1.500l-7 7" stroke="#72829f" stroke-width="2" /></svg></button>
        </span></div>
      <div class="frame">
        <div class="canvas">
          ${nodes.map((n) => html`<section class="node" style=${styleMap({ left: `${n.x}px`, top: `${n.y}px`, height: `${n.height}px` })}>
            <h3 class="name">${n.title}</h3>
            <ul class="fields">${n.fields.map((f) => html`<li class=${classMap({ field: true, keyed: f === n.key, active: !!n.active && f === n.key })}>${f === n.key ? icon("key") : nothing}<span>${f}</span></li>`)}</ul>
          </section>`)}
          <svg class="lines" width="720" height="200" font-family="DejaVu Sans" font-weight="700" font-size="10">
            <g fill="none" stroke="#000">
              <path d="M157 40.500h15M174 54.500h15M333 150.500h15M361 39.500h15M520 87.500h15M552 41.500h15" stroke-width="3" />
              <path d="M172 41l2.500 13M348 150l13-110M535 87l17-45" />
              <path d="M174.500 47.500a2.500 2.200 0 1 0 5 0a2.500 2.200 0 1 0-5 0M180.500 47.500a2.500 2.200 0 1 0 5 0a2.500 2.200 0 1 0-5 0M335.500 144a2.500 2.200 0 1 0 5 0a2.500 2.200 0 1 0-5 0M341.500 144a2.500 2.200 0 1 0 5 0a2.500 2.200 0 1 0-5 0M522.500 81a2.500 2.200 0 1 0 5 0a2.500 2.200 0 1 0-5 0M528.500 81a2.500 2.200 0 1 0 5 0a2.500 2.200 0 1 0-5 0" stroke-width="1.800" />
            </g>
            <text x="162" y="37">1</text><text x="363" y="36">1</text><text x="554" y="38">1</text>
          </svg>
        </div>
        <div class="vbar">
          <div class="group"><svg width="9" height="5"><path d="M4.500 0L9 5H0z" fill=${dark} /></svg>
            <span class="thumb"><svg width="8" height="8"><path d="M0 .5h8M0 3h8M0 5h8M0 7.500h8" stroke="#7d8598" /></svg></span></div>
          <svg width="9" height="5"><path d="M0 0h9L4.500 5z" fill=${dark} /></svg>
        </div>
        <div class="hbar">
          <div class="group"><svg width="6" height="8"><path d="M6 0v8L1 4z" fill=${dark} /></svg>
            <span class="thumb"><svg width="8" height="8"><path d="M.5 0v8M3 0v8M5 0v8M7.500 0v8" stroke="#7d8598" /></svg></span></div>
          <svg width="6" height="8"><path d="M0 0l5 4-5 4z" fill=${dark} /></svg>
        </div>
      </div>`;
  }
}

/* ---------- desktop task bar ---------- */

@customElement("task-bar")
class TaskBar extends LitElement {
  static styles = [baseStyles, css`
    :host { display: flex; height: 31px; background: linear-gradient(#3f86ea, #245ddb 12%, #2560de 80%, #1d4bb8); color: #fff; font-size: 11px; }
    .start { width: 96px; display: flex; align-items: center; gap: 6px; padding-left: 11px; color: #fff; font: italic 700 17px "Liberation Sans", sans-serif; text-shadow: 1px 1px 1px #1c4a1c; background: linear-gradient(#5fb45c, #3b923b 15%, #3a9a3a 75%, #2c752c); border-radius: 0 10px 10px 0; box-shadow: inset -3px 0 4px #26682a; }
    .grip { width: 4px; margin: 7px 0 6px; background: radial-gradient(circle at 2px 2px, #143c96 1px, transparent 2px) 0 0 / 4px 5px; }
    .quick { display: flex; align-items: center; gap: 7px; padding: 0 0 0 8px; }
    .g1 { margin-left: 9px; } .g2 { margin-left: 10px; }
    .chev { padding: 0 0 10px 18px; font-size: 11px; }
    .tasks { display: flex; gap: 2px; padding: 3px 0 2px 7px; flex: 1; }
    .task { width: 158px; display: flex; align-items: center; gap: 4px; padding-left: 10px; border-radius: 2px; background: linear-gradient(#5c9bf9, #3b7ff1 15%, #3a7df0 85%, #2d66d3); white-space: nowrap; }
    .task.active { background: linear-gradient(#163f95, #1e52b7 15%, #1d50b6); }
    .lang { padding: 0 15px 0 7px; align-self: center; }
    .tray { display: flex; align-items: center; gap: 7px; width: 74px; background: linear-gradient(#4fc0f5, #129be9 12%, #1290e8 85%, #0d74c4); border-left: 1px solid #0a5cb8; }
    .hide { width: 16px; height: 16px; margin-left: -8px; margin-right: -6px; border-radius: 8px; border: 1px solid #bfe0ff; background: radial-gradient(circle at 35% 30%, #8fc8ff, #1f6fdc); display: grid; place-items: center; }
  `];

  render() {
    return html`
      <button class="start"><svg width="18" height="17" viewBox="0 0 18 17"><path d="M2 3q3-2 6 0L7 8Q4 6 1 8z" fill="#f0592a" /><path d="M9 3.500q3 2 7 0L15 8.500q-3 2-7 0z" fill="#8cc63e" /><path d="M.5 9.500q3-2 6 0l-1 5q-3-2-6 0z" fill="#5a9bf0" /><path d="M7.500 10q3 2 7 0l-1 5q-3 2-7 0z" fill="#fbd03c" /></svg>пуск</button>
      <span class="grip g1"></span>
      <div class="quick">
        <button aria-label="Рабочий стол">${icon("desktop")}</button><button aria-label="Internet Explorer">${icon("ie")}</button><button aria-label="Игра">${icon("redCircle")}</button><button aria-label="Outlook">${icon("outlook")}</button><button aria-label="Media">${icon("media")}</button>
        <button class="chev">»</button>
      </div>
      <span class="grip g2"></span>
      <div class="tasks">
        <button class="task active">${icon("accessApp")}Microsoft Access - К ...</button>
        <button class="task">${icon("word")}СОЗДАНИЕ ГЛАВНО...</button>
        <button class="task">${icon("folder")}Макросы_формат_2...</button>
        <button class="task">${icon("word")}Записка_к_пр_W_2...</button>
      </div>
      <span class="grip"></span>
      <span class="lang">RL</span>
      <div class="tray"><button class="hide" aria-label="Скрыть"><svg width="6" height="8"><path d="M5 1L2 4l3 3" fill="none" stroke="#fff" stroke-width="2" /></svg></button>${icon("trayPaste")}<span>15:08</span></div>`;
  }
}

/* ---------- application shell ---------- */

@customElement("app-root")
class AppRoot extends LitElement {
  static styles = [baseStyles, css`
    :host { display: flex; flex-direction: column; min-height: 100vh; font-family: "Noto Sans", "Open Sans", sans-serif; font-size: 11px; background: #8ba9d8; }
    .main { flex: 1; display: flex; padding-right: 1px; }
    .nav { margin-left: 4px; }
    .splitter { width: 6px; background: #b3d0f7; border-right: 1px solid #6593cf; }
    .workspace { flex: 1; position: relative; background: #a3c2ee; border: solid #767a80; border-width: 1px 0 0 1px; min-width: 0; }
    .dialog { position: absolute; left: 90px; top: 23px; width: 454px; height: 265px; }
    .relations { position: absolute; left: 0; top: 405px; width: 787px; height: 273px; }
    .status { display: flex; height: 26px; border-top: 2px solid #567db1; background: linear-gradient(#e0ecfb, #c7dcf8 45%, #b3d0f5 50%, #d9e8f9 90%); color: #15428b; line-height: 20px; }
    .status span { flex: 1 1 50%; padding-left: 8px; }
    .status span + span { text-align: right; padding-right: 12px; border-left: 1px solid #8db2e3; }
  `];

  render() {
    return html`
      <access-ribbon></access-ribbon>
      <main class="main">
        <clipboard-pane></clipboard-pane>
        <nav-pane class="nav" selected="Стоимость товара по категориям"></nav-pane>
        <div class="splitter"></div>
        <div class="workspace">
          <switchboard-dialog class="dialog"></switchboard-dialog>
          <relations-window class="relations"></relations-window>
        </div>
      </main>
      <footer class="status"><span>Диспетчер кнопочных форм</span><span>Num Lock</span></footer>
      <task-bar></task-bar>`;
  }
}
